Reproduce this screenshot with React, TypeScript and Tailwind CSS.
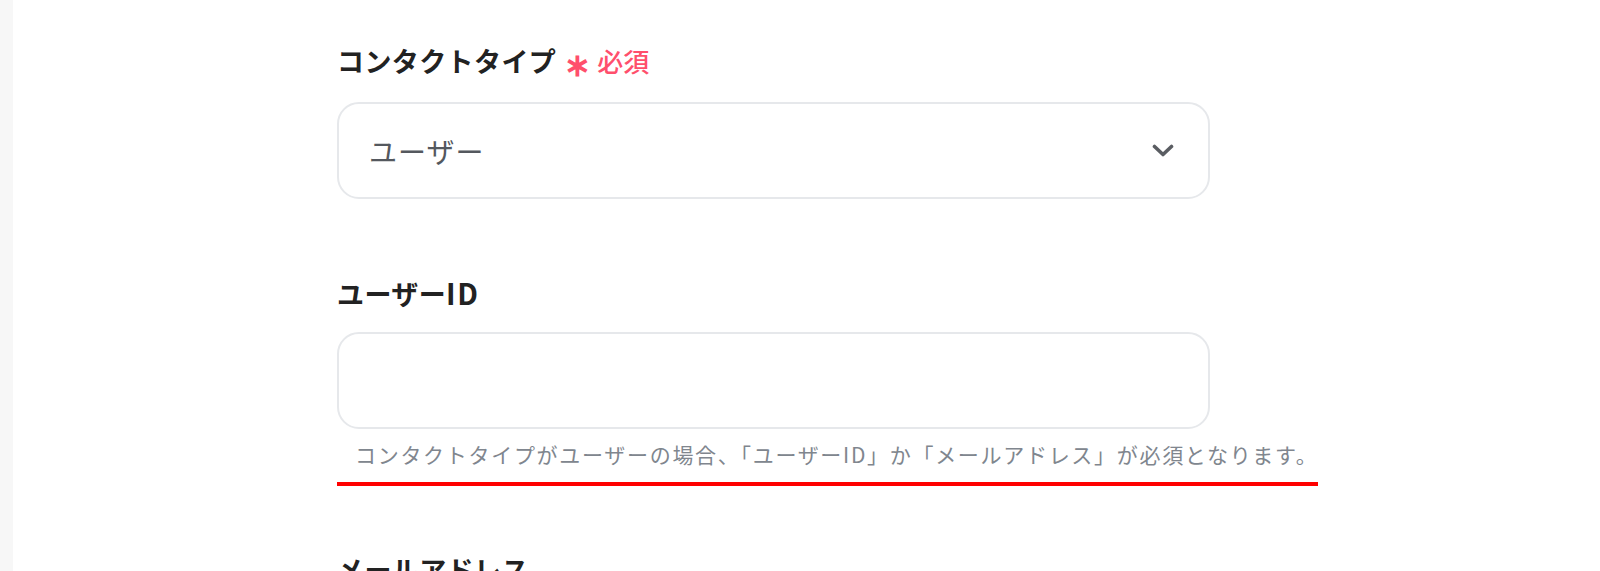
import React from "react";

const font = "font-['Noto_Sans_CJK_JP','Noto_Sans',sans-serif]";

export default function App() {
  return (
    <div className={`flex h-[571px] w-[1600px] overflow-hidden bg-white ${font}`}>
      <div className="w-[13px] shrink-0 bg-[#f7f7f7]" />
      <div className="flex-1 pl-[324px]">
        <div className="flex w-[990px] flex-col">
          <div className="mt-[43px] flex h-[36px] items-center">
            <span className="text-[27px] font-bold leading-[36px] tracking-[0.4px] text-[#222222]">
              コンタクトタイプ
            </span>
            <span className="ml-[8px] mt-[2px] text-[32px] font-bold leading-[36px] text-[#ff4f6c]">
              ∗
            </span>
            <span className="ml-[6px] text-[26px] font-medium leading-[36px] text-[#ff4f6c]">必須</span>
          </div>
          <div className="mt-[23px] flex h-[97px] w-[873px] items-center justify-between rounded-[22px] border-2 border-[#e6e8eb] pl-[30px] pr-[34px]">
            <span className="text-[28px] leading-[36px] tracking-[1px] text-[#54585e]">ユーザー</span>
            <svg width="22" height="13" viewBox="0 0 22 13" fill="none">
              <polyline
                points="2.5,2.5 11,10.5 19.5,2.5"
                stroke="#5a5d62"
                strokeWidth="3.6"
                strokeLinecap="round"
                strokeLinejoin="round"
              />
            </svg>
          </div>
          <div className="mt-[76px] flex h-[36px] items-center">
            <span className="text-[27px] font-bold leading-[36px] tracking-[0.4px] text-[#222222]">
              ユーザー<span className="text-[29px] tracking-[1.5px]">ID</span>
            </span>
          </div>
          <div className="mt-[21px] h-[97px] w-[873px] rounded-[22px] border-2 border-[#e6e8eb]" />
          <div className="mt-[10px] h-[30px] whitespace-nowrap pl-[18px] text-[21px] leading-[30px] tracking-[1.7px] text-[#80868e]">
            コンタクトタイプがユーザーの場合、「ユーザーID」か「メールアドレス」が必須となります。
          </div>
          <div className="mt-[13px] h-[4px] w-[981px] bg-[#ff0000]" />
          <div className="mt-[66px] flex h-[36px] items-center">
            <span className="text-[27px] font-bold leading-[36px] tracking-[0.4px] text-[#222222]">
              メールアドレス
            </span>
          </div>
        </div>
      </div>
    </div>
  );
}
